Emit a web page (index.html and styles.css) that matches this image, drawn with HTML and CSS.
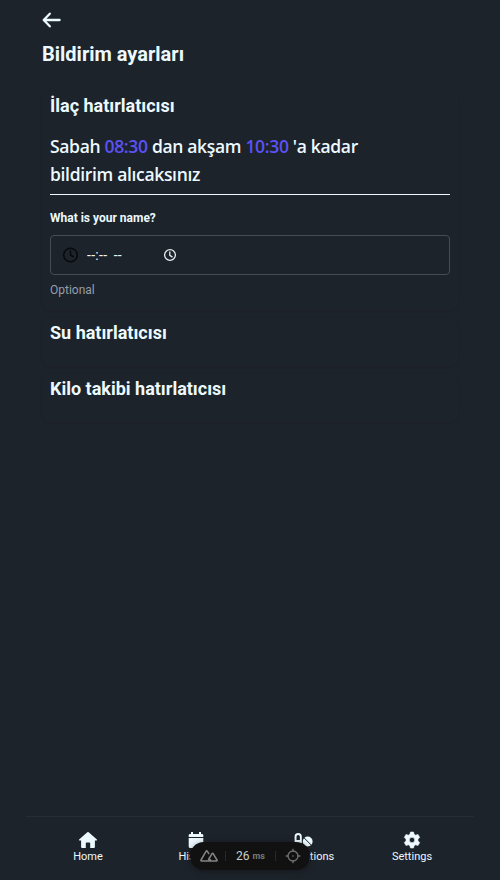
FILE: index.html
```html
<!DOCTYPE html>
<html lang="tr">
<head>
<meta charset="utf-8">
<title>Bildirim ayarları</title>
<link rel="stylesheet" href="styles.css">
</head>
<body>
<main class="page">
  <a class="back" aria-label="Geri"><svg width="20" height="20" viewBox="0 0 20 20" fill="none" stroke="currentColor" stroke-width="2.3" stroke-linecap="round" stroke-linejoin="round"><path d="M7.800 3.7 1.700 10l6.100 6.3M2 10h15.6"/></svg></a>
  <h1>Bildirim ayarları</h1>
  <section class="card first">
    <h2>İlaç hatırlatıcısı</h2>
    <p class="summary"><span class="line">Sabah <b>08:30</b> dan akşam <b>10:30</b> 'a kadar</span><span class="line">bildirim alıcaksınız</span></p>
    <label class="label">What is your name?</label>
    <div class="input">
      <svg class="lead" width="16" height="16" viewBox="0 0 16 16" fill="none" stroke="currentColor" stroke-width="1.5" stroke-linecap="round"><circle cx="8.500" cy="8" r="6.8"/><path d="M8.500 4v4l2.7 1.7"/></svg>
      <span class="time">--:-- --</span>
      <svg class="picker" width="14" height="14" viewBox="0 0 14 14" fill="none" stroke="currentColor" stroke-width="1.3"><circle cx="7" cy="7" r="5.4"/><path d="M6.8 3.5v3.8l2.7 1.8"/></svg>
    </div>
    <p class="help">Optional</p>
  </section>
  <section class="card"><h2>Su hatırlatıcısı</h2></section>
  <section class="card"><h2>Kilo takibi hatırlatıcısı</h2></section>
</main>
<nav class="nav">
  <a><svg width="20" height="20" viewBox="0 0 20 20" fill="currentColor"><path d="M9.3 2.3a1 1 0 0 1 1.4 0l8.2 7.2q.7 1-.5 1h-1.5V17q0 1-1 1h-3.7v-4.8q0-.7-.7-.7h-3q-.7 0-.7.7V18H4.1q-1 0-1-1v-6.500H1.600q-1.200 0-.5-1z"/></svg><span>Home</span></a>
  <a><svg width="20" height="20" viewBox="0 0 20 20" fill="currentColor"><path d="M5 2h2v2h6V2h2v2h1q1.300 0 1.300 1.300V7H2.700V5.300Q2.700 4 4 4h1zM2.700 8h14.600v8.500q0 1.500-1.500 1.500H4.200q-1.500 0-1.500-1.500z"/></svg><span>History</span></a>
  <a><svg width="20" height="20" viewBox="0 0 20 20" fill="currentColor"><path fill-rule="evenodd" d="M.6 6.700a3.600 3.600 0 0 1 7.200 0v7.600a3.600 3.600 0 0 1-7.200 0zM2.500 6.700V10h3.400V6.700a1.700 1.700 0 0 0-3.400 0z"/><circle cx="13.700" cy="11.500" r="4.900"/><path d="m9.900 7.700 7.300 7.300" stroke="#1d232a" stroke-width="1"/></svg><span>Medications</span></a>
  <a><svg width="20" height="20" viewBox="0 0 20 20" fill="currentColor"><path fill-rule="evenodd" d="M8.500 2h3l.6 2.300 1.600.9 2.300-.8 1.700 3-1.700 1.700v1.800l1.700 1.700-1.700 3-2.300-.8-1.600.9-.6 2.300h-3l-.6-2.300-1.600-.9-2.300.8-1.700-3L4 10.900V9.100L2.300 7.400l1.700-3 2.300.8 1.600-.9zM10 7.300a2.700 2.700 0 1 0 0 5.400 2.700 2.700 0 0 0 0-5.400z" stroke="currentColor" stroke-width=".6" stroke-linejoin="round"/></svg><span>Settings</span></a>
</nav>
<aside class="devtools">
  <svg class="logo" width="18" height="12" viewBox="0 0 18 12" fill="none" stroke="currentColor" stroke-width="1.500" stroke-linejoin="round"><path d="M8.700 10.900H1.500Q.6 10.900 1 10L6 1.400q.7-1.100 1.400 0L9 4.100M8.700 10.900q1.100 0 1.700-1.100L9 7.200M8.700 10.900h7.800q.9 0 .5-.9l-3.700-6.200q-.7-1-1.400 0L8.300 10"/></svg>
  <i></i>
  <span class="ms">26<small>ms</small></span>
  <i></i>
  <svg class="target" width="16" height="16" viewBox="0 0 16 16" fill="none" stroke="currentColor" stroke-width="1.300"><circle cx="8" cy="8" r="5"/><path d="M8 .7v3M8 12.300v3M.7 8h3M12.300 8h3"/><circle cx="8" cy="8" r=".8" fill="currentColor" stroke="none"/></svg>
</aside>
</body>
</html>
```
FILE: styles.css
```css
* { box-sizing: border-box; }
body {
  margin: 0;
  height: 880px;
  display: flex;
  flex-direction: column;
  background: #1d232a;
  color: #ecf9ff;
  font-family: Roboto, sans-serif;
  overflow: hidden;
}
h1, h2, p { margin: 0; }
.page { flex: 1; padding: 10px 42px 0; }
.back { display: block; width: 20px; height: 20px; }
svg { display: block; flex: none; }
h1 { font-size: 20px; line-height: 28px; font-weight: 700; margin-top: 10px; }
.card {
  height: 48px;
  margin-top: 8px;
  padding: 1px 8px 0;
  border-radius: 8px;
  box-shadow: 0 1px 2px rgba(28, 22, 32, .2);
}
.card.first { height: 219px; margin-top: 23px; }
h2 { font-size: 18px; line-height: 28px; font-weight: 700; }
.summary {
  height: 75px;
  padding-top: 12px;
  border-bottom: 1px solid #ecf9ff;
  font: 600 17.5px/28px "Open Sans", sans-serif;
  letter-spacing: -.33px;
}
.line { display: block; white-space: nowrap; }
.summary b { color: #5b52f5; font-weight: 600; }
.label { display: block; margin-top: 13px; font-size: 12px; line-height: 20px; font-weight: 700; }
.input {
  display: flex;
  align-items: center;
  height: 40px;
  margin-top: 7px;
  padding: 0 11px;
  border: 1px solid #454c58;
  border-radius: 4px;
}
.lead { color: #07090c; }
.time { width: 76px; margin-left: 9px; font-size: 14px; line-height: 20px; letter-spacing: .3px; word-spacing: 2.5px; white-space: nowrap; }
.picker { color: #e6edf2; }
.help { margin-top: 5px; font-size: 12px; line-height: 20px; color: #959eab; }
.nav {
  display: flex;
  height: 64px;
  margin: 0 26px;
  padding: 13px 8px 0;
  border-top: 1px solid #292c34;
}
.nav a {
  flex: 1;
  display: flex;
  flex-direction: column;
  align-items: center;
  font-size: 11px;
  line-height: 14px;
}
.devtools {
  position: absolute;
  left: 190px;
  top: 842px;
  width: 120px;
  height: 28px;
  display: flex;
  align-items: center;
  padding-left: 10px;
  border-radius: 14px;
  background: #111;
  color: #858585;
  box-shadow: 0 1px 7px rgba(0, 0, 0, .35);
}
.devtools i { width: 1px; height: 10px; margin-left: 7px; background: #292929; }
.ms { width: 40px; margin-left: 10px; font-size: 12px; line-height: 14px; color: #ccc; white-space: nowrap; }
.ms small { position: relative; top: -1px; margin-left: 3px; font-size: 9px; font-weight: 700; color: #777; }
.devtools .ms + i { margin-left: -1px; }
.target { margin-left: 9px; color: #707070; }
```
